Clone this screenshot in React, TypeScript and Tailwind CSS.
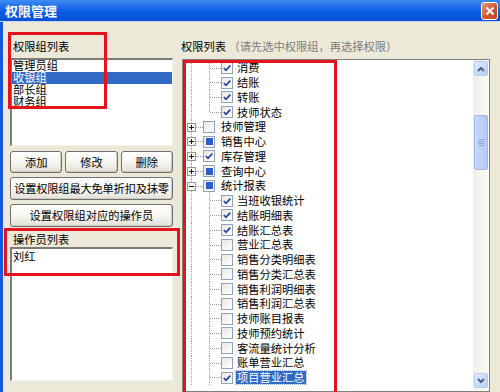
import React from 'react';

type Chk = 'on' | 'off' | 'part';

interface TreeRow {
  t: string;
  lvl: 0 | 1;
  c: Chk;
  exp?: '+' | '-';
  last?: boolean;
  sel?: boolean;
}

const groups = ['管理员组', '收银组', '部长组', '财务组'];

const rows: TreeRow[] = [
  { t: '消费', lvl: 1, c: 'on' },
  { t: '结账', lvl: 1, c: 'on' },
  { t: '转账', lvl: 1, c: 'on' },
  { t: '技师状态', lvl: 1, c: 'on', last: true },
  { t: '技师管理', lvl: 0, c: 'off', exp: '+' },
  { t: '销售中心', lvl: 0, c: 'part', exp: '+' },
  { t: '库存管理', lvl: 0, c: 'on', exp: '+' },
  { t: '查询中心', lvl: 0, c: 'part', exp: '+' },
  { t: '统计报表', lvl: 0, c: 'part', exp: '-' },
  { t: '当班收银统计', lvl: 1, c: 'on' },
  { t: '结账明细表', lvl: 1, c: 'on' },
  { t: '结账汇总表', lvl: 1, c: 'on' },
  { t: '营业汇总表', lvl: 1, c: 'off' },
  { t: '销售分类明细表', lvl: 1, c: 'off' },
  { t: '销售分类汇总表', lvl: 1, c: 'off' },
  { t: '销售利润明细表', lvl: 1, c: 'off' },
  { t: '销售利润汇总表', lvl: 1, c: 'off' },
  { t: '技师账目报表', lvl: 1, c: 'off' },
  { t: '技师预约统计', lvl: 1, c: 'off' },
  { t: '客流量统计分析', lvl: 1, c: 'off' },
  { t: '账单营业汇总', lvl: 1, c: 'off' },
  { t: '项目营业汇总', lvl: 1, c: 'on', sel: true },
];

const RowH = 14.75;

const CheckBox: React.FC<{ state: Chk }> = ({ state }) => (
  <span className="w-[12px] h-[12px] shrink-0 border border-[#8fa3bf] bg-gradient-to-br from-[#e9e8e2] to-white flex items-center justify-center">
    {state === 'on' && (
      <svg width="10" height="10" viewBox="0 0 10 10">
        <polyline points="1.8,5 4,7.3 8.3,2.6" fill="none" stroke="#23419b" strokeWidth="1.7" />
      </svg>
    )}
    {state === 'part' && <span className="w-[7px] h-[7px] bg-[#2c5ccd]" />}
  </span>
);

const Dots: React.FC<{ x1: number; y1: number; x2: number; y2: number }> = (p) => (
  <line {...p} stroke="#9a9a9a" strokeWidth="1" strokeDasharray="1 1" shapeRendering="crispEdges" />
);

const Guide: React.FC<{ row: TreeRow }> = ({ row }) => {
  const mid = 7.5;
  if (row.lvl === 0) {
    return (
      <svg width="16" height={RowH} className="shrink-0">
        <Dots x1={4.5} y1={0} x2={4.5} y2={RowH} />
        <Dots x1={9} y1={mid} x2={16} y2={mid} />
        <rect x="0.5" y="3.5" width="8" height="8" fill="#f7f7f4" stroke="#8d9aa0" shapeRendering="crispEdges" />
        <line x1="2" y1="7.5" x2="7" y2="7.5" stroke="#1a1a1a" shapeRendering="crispEdges" />
        {row.exp === '+' && <line x1="4.5" y1="5" x2="4.5" y2="10" stroke="#1a1a1a" shapeRendering="crispEdges" />}
      </svg>
    );
  }
  return (
    <svg width="34" height={RowH} className="shrink-0">
      <Dots x1={4.5} y1={0} x2={4.5} y2={RowH} />
      <Dots x1={22.5} y1={0} x2={22.5} y2={row.last ? mid : RowH} />
      <Dots x1={23} y1={mid} x2={34} y2={mid} />
    </svg>
  );
};

const XpButton: React.FC<{ children: React.ReactNode; className?: string }> = ({ children, className }) => (
  <button
    className={`flex items-center justify-center rounded-[3px] border border-[#6f6f6f] bg-gradient-to-b from-white via-[#f6f5f0] to-[#e3e1d8] text-[11.25px] text-black shadow-[inset_-1px_-1px_0_#cfcabc] ${className ?? ''}`}
  >
    {children}
  </button>
);

export default function App() {
  return (
    <div className="relative w-[500px] h-[392px] overflow-hidden bg-[#ece9d8] font-['Noto_Sans_CJK_SC','Noto_Sans',sans-serif] text-black">
      {/* Title bar */}
      <div className="h-[21px] flex items-center justify-between pl-[5px] pr-[2px] bg-gradient-to-b from-[#3f8cf3] via-[#0a5de6] to-[#0550d8]">
        <span className="text-white text-[13px] font-bold leading-none">权限管理</span>
        <span className="w-[17px] h-[18px] rounded-[3px] border border-white bg-gradient-to-br from-[#eb9a7c] via-[#d65a34] to-[#c2401c] flex items-center justify-center">
          <svg width="10" height="10" viewBox="0 0 10 10">
            <path d="M1.5 1.5 L8.5 8.5 M8.5 1.5 L1.5 8.5" stroke="white" strokeWidth="2" />
          </svg>
        </span>
      </div>
      <div className="h-[1px] bg-[#c6d6f4]" />

      <div className="flex h-[370px]">
        <div className="w-[3px] bg-[#1457d9]" />

        {/* Left column */}
        <div className="w-[170px] pl-[7px] pt-[16px] flex flex-col">
          <div className="h-[16px] leading-[16px] text-[11.25px] pl-[3px]">权限组列表</div>
          <div className="mt-[4px] h-[88px] bg-white border-t-2 border-l-2 border-[#7c7b78] border-r border-b border-r-[#f4f3ee] border-b-[#f4f3ee]">
            {groups.map((g, i) => (
              <div
                key={g}
                className={`h-[12px] leading-[10px] text-[11.25px] pl-[1px] ${i === 1 ? 'bg-[#316ac5] text-white' : ''}`}
              >
                {g}
              </div>
            ))}
          </div>

          <div className="mt-[5px] grid grid-cols-3 gap-[3px] h-[22px]">
            <XpButton>添加</XpButton>
            <XpButton>修改</XpButton>
            <XpButton>删除</XpButton>
          </div>
          <XpButton className="mt-[4px] h-[23px] tracking-[-0.2px]">设置权限组最大免单折扣及抹零</XpButton>
          <XpButton className="mt-[4px] h-[23px]">设置权限组对应的操作员</XpButton>

          <div className="mt-[4px] h-[16px] leading-[16px] text-[11.25px] pl-[3px]">操作员列表</div>
          <div className="h-[134px] bg-white border-t-2 border-l-2 border-[#7c7b78] border-r border-b border-r-[#f4f3ee] border-b-[#f4f3ee] pl-[1px] pt-[1px]">
            <div className="text-[11.25px] leading-[13px]">刘红</div>
          </div>
        </div>

        {/* Right column */}
        <div className="flex-1 pl-[9px] pt-[16px] flex flex-col">
          <div className="h-[16px] leading-[16px] text-[11.25px] -ml-[1px] whitespace-nowrap">
            权限列表 <span className="text-[#7d7d7d]">（请先选中权限组，再选择权限）</span>
          </div>
          <div className="mt-[5px] w-[308px] h-[342px] bg-white border border-[#7f7f7f] flex">
            <div className="flex-1 pl-[4px] pt-[0.5px]">
              {rows.map((r) => (
                <div key={r.t} className="flex items-center h-[14.75px]">
                  <Guide row={r} />
                  <CheckBox state={r.c} />
                  <span
                    className={`px-[1px] text-[11.25px] leading-[13px] whitespace-nowrap ${r.lvl === 0 ? 'ml-[5px]' : 'ml-[3px]'} ${
                      r.sel ? 'bg-[#316ac5] text-white outline outline-1 outline-dotted outline-[#9ab0e0]' : ''
                    }`}
                  >
                    {r.t}
                  </span>
                </div>
              ))}
            </div>

            {/* Scrollbar */}
            <div className="w-[16px] bg-gradient-to-r from-[#f0efe8] to-[#fbfbf8] flex flex-col items-center">
              <div className="mt-[1px] w-[14px] h-[15px] rounded-[2px] border border-[#b6c9f3] bg-gradient-to-br from-[#e2ebfe] to-[#b8cdf9] flex items-center justify-center">
                <svg width="8" height="6" viewBox="0 0 8 6">
                  <path d="M1 5 L4 2 L7 5" fill="none" stroke="#4d6185" strokeWidth="2" />
                </svg>
              </div>
              <div className="mt-[39px] w-[14px] h-[55px] rounded-[2px] border border-[#9fb6e6] bg-gradient-to-r from-[#c9d9fd] to-[#b4c9f6] flex flex-col items-center justify-center gap-[1px]">
                <span className="w-[6px] h-[1px] bg-[#8ea6d8]" />
                <span className="w-[6px] h-[1px] bg-[#8ea6d8]" />
                <span className="w-[6px] h-[1px] bg-[#8ea6d8]" />
                <span className="w-[6px] h-[1px] bg-[#8ea6d8]" />
              </div>
              <div className="flex-1" />
              <div className="mb-[3px] w-[14px] h-[15px] rounded-[2px] border border-[#b6c9f3] bg-gradient-to-br from-[#e2ebfe] to-[#b8cdf9] flex items-center justify-center">
                <svg width="8" height="6" viewBox="0 0 8 6">
                  <path d="M1 1 L4 4 L7 1" fill="none" stroke="#4d6185" strokeWidth="2" />
                </svg>
              </div>
            </div>
          </div>
        </div>
      </div>

      {/* Red annotation boxes */}
      <div className="absolute left-[8px] top-[32px] w-[99px] h-[77px] border-[3px] border-[#e3141b]" />
      <div className="absolute left-[4px] top-[228px] w-[176px] h-[48px] border-[3px] border-[#e3141b]" />
      <div className="absolute left-[183px] top-[60px] w-[154px] h-[345px] border-[3px] border-[#e3141b]" />
    </div>
  );
}
